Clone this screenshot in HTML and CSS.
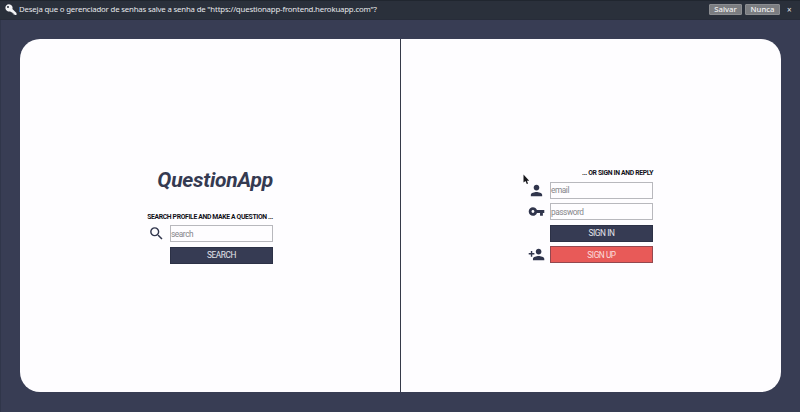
FILE: index.html
```html
<!DOCTYPE html>
<html lang="pt-BR">
<head>
<meta charset="utf-8">
<title>QuestionApp</title>
<link rel="stylesheet" href="styles.css">
</head>
<body>
<header class="prompt">
  <svg class="prompt-key" viewBox="0 0 12 12"><path fill-rule="evenodd" d="M4 .2a3.7 3.7 0 1 0 1.3 7.2l.8.8h1.2v1.1h1.2v1.1h1L10 11h1.5V8.9L7.4 5A3.7 3.7 0 0 0 4 .2ZM3 1.9a1 1 0 1 1 0 2 1 1 0 0 1 0-2Z"/></svg>
  <span class="prompt-text">Deseja que o gerenciador de senhas salve a senha de "https://questionapp-frontend.herokuapp.com"?</span>
  <button class="prompt-btn save">Salvar</button>
  <button class="prompt-btn never">Nunca</button>
  <span class="prompt-close">×</span>
</header>
<main class="page">
  <div class="card">
    <section class="panel panel-search">
      <form class="form">
        <h1 class="title">QuestionApp</h1>
        <h2 class="label label-search">SEARCH PROFILE AND MAKE A QUESTION ...</h2>
        <div class="row">
          <svg class="icon" viewBox="0 0 24 24"><path d="M15.5 14h-.79l-.28-.27A6.471 6.471 0 0 0 16 9.5 6.5 6.5 0 1 0 9.5 16c1.61 0 3.09-.59 4.23-1.57l.27.28v.79l5 4.99L20.49 19l-4.99-5zm-6 0C7.01 14 5 11.99 5 9.5S7.01 5 9.5 5 14 7.01 14 9.5 11.99 14 9.5 14z"/></svg>
          <input class="field" type="text" placeholder="search">
        </div>
        <div class="row"><button class="btn" type="button">SEARCH</button></div>
      </form>
    </section>
    <section class="panel panel-sign">
      <form class="form">
        <h2 class="label label-sign">... OR SIGN IN AND REPLY</h2>
        <div class="row">
          <svg class="icon" viewBox="0 0 24 24"><path d="M12 12c2.21 0 4-1.79 4-4s-1.79-4-4-4-4 1.79-4 4 1.79 4 4 4zm0 2c-2.67 0-8 1.34-8 4v2h16v-2c0-2.66-5.33-4-8-4z"/></svg>
          <input class="field" type="email" placeholder="email">
        </div>
        <div class="row">
          <svg class="icon" viewBox="0 0 24 24"><path d="M12.65 10C11.83 7.67 9.61 6 7 6c-3.31 0-6 2.69-6 6s2.69 6 6 6c2.61 0 4.83-1.67 5.65-4H17v4h4v-4h2v-4H12.65zM7 14c-1.1 0-2-.9-2-2s.9-2 2-2 2 .9 2 2-.9 2-2 2z"/></svg>
          <input class="field" type="password" placeholder="password">
        </div>
        <div class="row"><button class="btn" type="button">SIGN IN</button></div>
        <div class="row">
          <svg class="icon" viewBox="0 0 24 24"><path d="M15 12c2.21 0 4-1.79 4-4s-1.79-4-4-4-4 1.79-4 4 1.79 4 4 4zm-9-2V7H4v3H1v2h3v3h2v-3h3v-2H6zm9 4c-2.67 0-8 1.34-8 4v2h16v-2c0-2.66-5.33-4-8-4z"/></svg>
          <button class="btn btn-signup" type="button">SIGN UP</button>
        </div>
      </form>
    </section>
  </div>
</main>
<svg class="cursor" viewBox="0 0 7 11"><path d="M.5.5v8l2-1.5 1.3 3 1.3-.6-1.2-2.7h2.3z"/></svg>
</body>
</html>
```
FILE: styles.css
```css
* {
  box-sizing: border-box;
}

body {
  margin: 0;
  width: 800px;
  height: 412px;
  overflow: hidden;
  display: flex;
  flex-direction: column;
  background: #383d54;
  font-family: Roboto, "Liberation Sans", sans-serif;
}

.prompt {
  height: 20px;
  flex: none;
  display: flex;
  align-items: center;
  padding: 0 8px 1px 5px;
  background: #2a303b;
  border-top: 1px solid #20262f;
  border-bottom: 1px solid #272c39;
  color: #e6e8ec;
  font: 7.8px "Noto Sans", "Open Sans", sans-serif;
}

.prompt-key {
  width: 12px;
  height: 12px;
  margin-right: 2px;
  fill: #f3f4f6;
}

.prompt-text {
  flex: 1;
  padding-bottom: 1px;
  letter-spacing: -0.17px;
  white-space: nowrap;
}

.prompt-btn {
  height: 11px;
  padding: 0;
  border: 1px solid #8b8d91;
  border-radius: 1px;
  background: #7b7d81;
  color: #f0f0f1;
  font: 500 7.7px/9px "Noto Sans", sans-serif;
}

.save {
  width: 33px;
  margin-right: 3px;
}

.never {
  width: 35px;
}

.prompt-close {
  width: 12px;
  padding-left: 7px;
  font-size: 8px;
}

.page {
  flex: 1;
  padding: 19px 19px 20px;
  border-left: 1px solid #30364a;
}

.card {
  height: 353px;
  display: flex;
  border-radius: 20px;
  background: #fefdff;
}

.panel {
  flex: 1;
  display: flex;
  align-items: center;
  justify-content: center;
}

.panel-search {
  flex: none;
  width: 381px;
  border-right: 1px solid #353a49;
}

.panel-sign {
  padding-right: 2px;
}

.form {
  width: 126px;
  display: flex;
  flex-direction: column;
  align-items: flex-end;
  gap: 5px;
}

.title {
  margin: 1px 0 14px;
  color: #353a51;
  font-size: 21px;
  font-style: italic;
  font-weight: 700;
  letter-spacing: -0.25px;
  line-height: 24px;
  white-space: nowrap;
}

.label {
  margin: 1px 0 -1px;
  color: #101018;
  font-size: 6.8px;
  font-weight: 700;
  letter-spacing: -0.34px;
  line-height: 9px;
  white-space: nowrap;
}

.label-search {
  margin-top: 2px;
  margin-bottom: -2px;
}

.row {
  display: flex;
  align-items: center;
  justify-content: flex-end;
  gap: 5px;
  height: 16.6px;
}

.icon {
  width: 17px;
  height: 17px;
  fill: #30354c;
}

.field,
.btn {
  width: 103px;
  height: 17px;
  margin: 0;
  border-radius: 0;
  font-family: Roboto, sans-serif;
  font-size: 8.3px;
  letter-spacing: -0.45px;
}

.field {
  padding: 0;
  border: 1px solid #b8b8bd;
  background: #fefdff;
}

.field::placeholder {
  color: #85858a;
}

.btn {
  padding: 0;
  border: 1px solid #2c3146;
  background: #363b53;
  color: #e4e4eb;
}

.btn-signup {
  border-color: #94484f;
  background: #e85a58;
  color: #fbdedd;
}

.cursor {
  position: absolute;
  left: 523px;
  top: 174px;
  width: 7px;
  height: 11px;
  fill: #17171c;
}
```
